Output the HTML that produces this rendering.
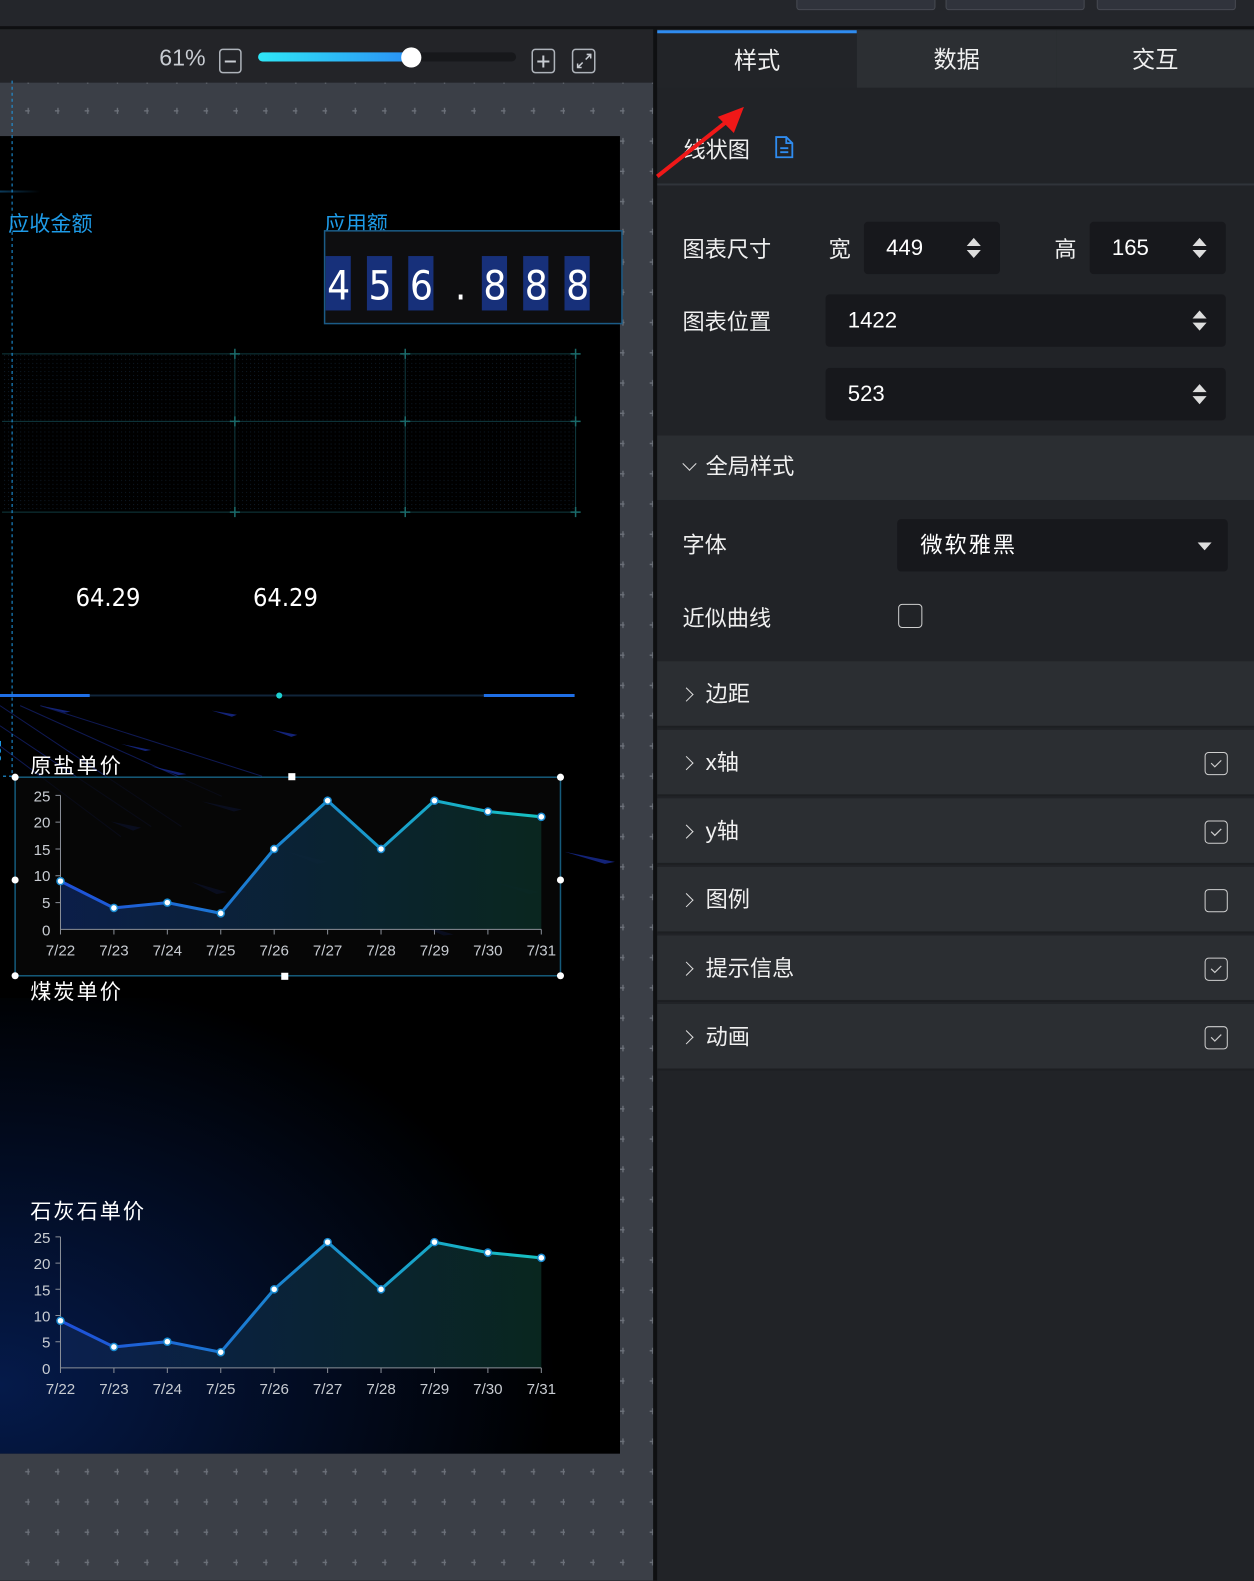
<!DOCTYPE html>
<html><head><meta charset="utf-8"><style>
*{margin:0;padding:0;box-sizing:border-box}
body{width:1254px;height:1580px;overflow:hidden;background:#202226;font-family:"Liberation Sans","Noto Sans CJK SC",sans-serif}
#w{position:absolute;left:0;top:0;width:1244px;height:1568px;transform:scale(1.00804);transform-origin:0 0}
.a{position:absolute}
.tab{position:absolute;top:30px;height:57px;width:198px;background:#2c2f33;color:#f0f0f0;font-size:23px;text-align:center;line-height:58px}
.lbl{position:absolute;color:#f0f0f0;font-size:22px}
.inp{position:absolute;background:#17181c;border-radius:4px;color:#fff;font-size:22px;line-height:52px;height:52px;padding-left:22px}
.sp{position:absolute;right:18px;top:14px;width:16px;height:24px}
.sec{position:absolute;left:652px;width:592px;height:66px;background:#2b2e32;border-bottom:2px solid #1d1f22;color:#f0f0f0;font-size:22px;line-height:66px;padding-left:48px}
.chev{position:absolute;left:24px;top:28px;width:10px;height:10px;border-right:1.8px solid #ddd;border-top:1.8px solid #ddd;transform:rotate(45deg)}
.cb{position:absolute;right:26px;top:22px;width:23px;height:23px;border:1.5px solid #cfcfcf;border-radius:4px}
</style></head><body><div id="w">
<div class="a" style="left:0;top:0;width:1244px;height:26px;background:#24262b"></div>
<div class="a" style="left:790px;top:-4px;width:138px;height:14px;background:#30333c;border:1.5px solid #474a52;border-radius:3px"></div>
<div class="a" style="left:938px;top:-4px;width:138px;height:14px;background:#30333c;border:1.5px solid #474a52;border-radius:3px"></div>
<div class="a" style="left:1088px;top:-4px;width:138px;height:14px;background:#30333c;border:1.5px solid #474a52;border-radius:3px"></div>
<div class="a" style="left:0;top:26px;width:1244px;height:3px;background:#0e0f11"></div>

<svg class="a" style="left:0;top:29px" width="650" height="1539" viewBox="0 29 650 1539">
<defs>
<pattern id="dots" x="0" y="0" width="29.5" height="30" patternUnits="userSpaceOnUse"><path d="M25 20h6M28 17v6" stroke="#6c717a" stroke-width="1.3"/></pattern>
<linearGradient id="sl" x1="0" x2="1"><stop offset="0" stop-color="#2fe7f7"/><stop offset="1" stop-color="#2a8ff5"/></linearGradient>
<linearGradient id="ln" x1="0" x2="1"><stop offset="0" stop-color="#1f4fd9"/><stop offset=".5" stop-color="#1a8ad0"/><stop offset="1" stop-color="#17c2c2"/></linearGradient>
<linearGradient id="ar" x1="0" x2="1"><stop offset="0" stop-color="#0c2150" stop-opacity=".9"/><stop offset="1" stop-color="#0a2a22" stop-opacity=".9"/></linearGradient>
<linearGradient id="fl" x1="0" x2="1"><stop offset="0" stop-color="#0b3a5a"/><stop offset="1" stop-color="#000"/></linearGradient>
<radialGradient id="bg2" cx="0" cy="0.85" r="0.9"><stop offset="0" stop-color="#051a4a"/><stop offset="1" stop-color="#000"/></radialGradient>
<pattern id="grid" width="4" height="4" patternUnits="userSpaceOnUse"><rect width="1" height="1" fill="#0e1a26"/></pattern>
</defs>
<rect x="0" y="29" width="650" height="53" fill="#232428"/>
<text x="158" y="65" fill="#c8ccd2" font-size="23" font-family="Liberation Sans">61%</text>
<rect x="218" y="49" width="21" height="23" rx="3" fill="none" stroke="#aeb3ba" stroke-width="1.5"/><path d="M223 61h11" stroke="#c8ccd2" stroke-width="2"/>
<rect x="256" y="52" width="256" height="9" rx="4.5" fill="#17181b"/>
<rect x="256" y="52" width="154" height="9" rx="4.5" fill="url(#sl)"/>
<circle cx="408" cy="57" r="10" fill="#fff"/>
<rect x="528" y="49" width="22" height="23" rx="3" fill="none" stroke="#aeb3ba" stroke-width="1.5"/><path d="M533 61h12M539 55v12" stroke="#c8ccd2" stroke-width="2"/>
<rect x="568" y="49" width="22" height="23" rx="3" fill="none" stroke="#aeb3ba" stroke-width="1.5"/><path d="M573 67l5-5M573 63v4h4M586 54l-5 5M582 54h4v4" stroke="#c8ccd2" stroke-width="1.5" fill="none"/>
<rect x="0" y="82" width="648" height="1486" fill="#3b3f47"/>
<rect x="0" y="82" width="648" height="1486" fill="url(#dots)"/>
<rect x="0" y="135" width="615" height="1307" fill="#000"/>
<rect x="0" y="990" width="615" height="452" fill="url(#bg2)"/>
<rect x="0" y="189" width="40" height="2" fill="url(#fl)"/>
<text x="8" y="229" fill="#1e9be8" font-size="21">应收金额</text>
<text x="322" y="229" fill="#1e9be8" font-size="21">应用额</text>
<rect x="322" y="229" width="295" height="92" fill="#0e0e10" stroke="#1b5b86" stroke-width="1.5"/>
<g fill="#17307a"><rect x="323" y="254" width="25" height="54"/><rect x="364" y="254" width="25" height="54"/><rect x="405" y="254" width="25" height="54"/><rect x="478" y="254" width="25" height="54"/><rect x="519" y="254" width="25" height="54"/><rect x="560" y="254" width="25" height="54"/></g>
<g fill="#fff" font-size="40" font-family="DejaVu Sans Condensed,Liberation Sans" text-anchor="middle"><text x="336" y="297">4</text><text x="377" y="297">5</text><text x="418" y="297">6</text><text x="457" y="297">.</text><text x="491" y="297">8</text><text x="532" y="297">8</text><text x="573" y="297">8</text></g>
<rect x="2" y="351" width="569" height="157" fill="url(#grid)"/>
<g stroke="#0f3a3f" stroke-width="1" fill="none"><path d="M2 351h569M2 418h569M2 508h569M233 351v157M402 351v157M571 351v157"/></g>
<g stroke="#1a6a6a" stroke-width="1.5"><path d="M228 351h10M233 346v10M397 351h10M402 346v10M566 351h10M571 346v10M228 418h10M233 413v10M397 418h10M402 413v10M566 418h10M571 413v10M228 508h10M233 503v10M397 508h10M402 503v10M566 508h10M571 503v10"/></g>
<g fill="#fff" font-size="25" font-family="DejaVu Sans Condensed,Liberation Sans"><text x="75" y="601">64.29</text><text x="251" y="601">64.29</text></g>
<path d="M0 690h570" stroke="#10253a" stroke-width="2"/>
<path d="M0 690h89M480 690h90" stroke="#1f6fe6" stroke-width="3"/>
<circle cx="277" cy="690" r="3" fill="#1fd0d0"/>
<g fill="#1a2fa0" opacity=".75"><path d="M110 815l30 6-8 3zM190 875l35 10-10 2zM285 845l40 10-10 2zM410 915l40 12-10 1zM560 845l50 10-10 2zM490 875l45 10-10 2zM210 705l25 4-5 2zM270 724l25 5-6 2zM120 738l30 6-6 1zM150 760l35 8-8 1zM40 700l30 6-6 1zM200 795l40 8-8 2z"/></g>
<g stroke="#1a2a8a" stroke-width="1" opacity=".6"><path d="M0 700l180 120M0 720l150 100M0 740l120 90M20 700l200 90M40 700l220 70"/></g>
<path d="M12 80v690H0" stroke="#1e9be8" stroke-width="1" stroke-dasharray="3 3" fill="none"/>
<text x="10" y="740" fill="#1e9be8" font-size="13" transform="rotate(90 4 728)">523</text>
<text x="30" y="767" fill="#fff" font-size="21" letter-spacing="2">原盐单价</text>
<rect x="15" y="771" width="541" height="197" fill="#070708" fill-opacity=".8" stroke="#155a7a" stroke-width="1.5"/>
<path d="M60 874.1L113 900.7L166 895.4L219 906L272 842.2L325 794.3L378 842.2L431 794.3L484 805L537 810.3V922H60Z" fill="url(#ar)"/>
<path d="M60 789V922H537M60 922v5M113 922v5M166 922v5M219 922v5M272 922v5M325 922v5M378 922v5M431 922v5M484 922v5M537 922v5M55 789h5M55 815.6h5M55 842.2h5M55 868.8h5M55 895.4h5" stroke="#8a8f98" stroke-width="1" fill="none"/>
<path d="M60 874.1L113 900.7L166 895.4L219 906L272 842.2L325 794.3L378 842.2L431 794.3L484 805L537 810.3" stroke="url(#ln)" stroke-width="3" fill="none"/>
<g fill="#fff" stroke="#1a8ad0" stroke-width="1.5"><circle cx="60" cy="874.1" r="3.5"/><circle cx="113" cy="900.7" r="3.5"/><circle cx="166" cy="895.4" r="3.5"/><circle cx="219" cy="906" r="3.5"/><circle cx="272" cy="842.2" r="3.5"/><circle cx="325" cy="794.3" r="3.5"/><circle cx="378" cy="842.2" r="3.5"/><circle cx="431" cy="794.3" r="3.5"/><circle cx="484" cy="805" r="3.5"/><circle cx="537" cy="810.3" r="3.5"/></g>
<g fill="#c8ccd2" font-size="15" text-anchor="end"><text x="50" y="795">25</text><text x="50" y="821">20</text><text x="50" y="848">15</text><text x="50" y="874">10</text><text x="50" y="901">5</text><text x="50" y="928">0</text></g>
<g fill="#c8ccd2" font-size="15" text-anchor="middle"><text x="60" y="948">7/22</text><text x="113" y="948">7/23</text><text x="166" y="948">7/24</text><text x="219" y="948">7/25</text><text x="272" y="948">7/26</text><text x="325" y="948">7/27</text><text x="378" y="948">7/28</text><text x="431" y="948">7/29</text><text x="484" y="948">7/30</text><text x="537" y="948">7/31</text></g>
<g fill="#fff"><circle cx="15" cy="771" r="3.5"/><circle cx="556" cy="771" r="3.5"/><circle cx="15" cy="873" r="3.5"/><circle cx="556" cy="873" r="3.5"/><circle cx="15" cy="968" r="3.5"/><circle cx="556" cy="968" r="3.5"/><rect x="286" y="767" width="7" height="7"/><rect x="279" y="965" width="7" height="7"/></g>
<text x="30" y="991" fill="#fff" font-size="21" letter-spacing="2">煤炭单价</text>
<text x="30" y="1209" fill="#fff" font-size="21" letter-spacing="2">石灰石单价</text>
<path d="M60 1310.2L113 1336.2L166 1331L219 1341.4L272 1279L325 1232.2L378 1279L431 1232.2L484 1242.6L537 1247.8V1357H60Z" fill="url(#ar)"/>
<path d="M60 1227V1357H537M60 1357v5M113 1357v5M166 1357v5M219 1357v5M272 1357v5M325 1357v5M378 1357v5M431 1357v5M484 1357v5M537 1357v5M55 1227h5M55 1253h5M55 1279h5M55 1305h5M55 1331h5" stroke="#8a8f98" stroke-width="1" fill="none"/>
<path d="M60 1310.2L113 1336.2L166 1331L219 1341.4L272 1279L325 1232.2L378 1279L431 1232.2L484 1242.6L537 1247.8" stroke="url(#ln)" stroke-width="3" fill="none"/>
<g fill="#fff" stroke="#1a8ad0" stroke-width="1.5"><circle cx="60" cy="1310.2" r="3.5"/><circle cx="113" cy="1336.2" r="3.5"/><circle cx="166" cy="1331" r="3.5"/><circle cx="219" cy="1341.4" r="3.5"/><circle cx="272" cy="1279" r="3.5"/><circle cx="325" cy="1232.2" r="3.5"/><circle cx="378" cy="1279" r="3.5"/><circle cx="431" cy="1232.2" r="3.5"/><circle cx="484" cy="1242.6" r="3.5"/><circle cx="537" cy="1247.8" r="3.5"/></g>
<g fill="#c8ccd2" font-size="15" text-anchor="end"><text x="50" y="1233">25</text><text x="50" y="1259">20</text><text x="50" y="1285">15</text><text x="50" y="1311">10</text><text x="50" y="1337">5</text><text x="50" y="1363">0</text></g>
<g fill="#c8ccd2" font-size="15" text-anchor="middle"><text x="60" y="1383">7/22</text><text x="113" y="1383">7/23</text><text x="166" y="1383">7/24</text><text x="219" y="1383">7/25</text><text x="272" y="1383">7/26</text><text x="325" y="1383">7/27</text><text x="378" y="1383">7/28</text><text x="431" y="1383">7/29</text><text x="484" y="1383">7/30</text><text x="537" y="1383">7/31</text></g>
</svg>

<div class="a" style="left:648px;top:29px;width:4px;height:1539px;background:#0f1012"></div>
<div class="a" style="left:652px;top:29px;width:592px;height:1539px;background:#212327"></div>
<div class="tab" style="left:652px;background:#222428;border-top:3px solid #2f8cf0;line-height:54px">样式</div>
<div class="tab" style="left:850px">数据</div>
<div class="tab" style="left:1048px;width:196px">交互</div>
<div class="lbl" style="left:678px;top:131px">线状图</div>
<svg class="a" style="left:767px;top:134px" width="22" height="24"><path d="M3 2h10l6 6v14H3z M13 2v6h6 M7 13h8M7 17h8" fill="none" stroke="#2f8cf0" stroke-width="1.8"/></svg>
<svg class="a" style="left:650px;top:100px" width="100" height="80"><path d="M2 75L78 15" stroke="#f01818" stroke-width="4"/><path d="M88 6L62 16L78 32Z" fill="#f01818"/></svg>
<div class="a" style="left:652px;top:182px;width:592px;height:2px;background:#30343a"></div>
<div class="lbl" style="left:677px;top:230px">图表尺寸</div>
<div class="lbl" style="left:822px;top:230px">宽</div>
<div class="inp" style="left:857px;top:220px;width:135px">449<svg class="sp" viewBox="0 0 16 24"><path d="M1 10L8 2L15 10ZM1 14L8 22L15 14Z" fill="#ddd"/></svg></div>
<div class="lbl" style="left:1046px;top:230px">高</div>
<div class="inp" style="left:1081px;top:220px;width:135px">165<svg class="sp" viewBox="0 0 16 24"><path d="M1 10L8 2L15 10ZM1 14L8 22L15 14Z" fill="#ddd"/></svg></div>
<div class="lbl" style="left:677px;top:302px">图表位置</div>
<div class="inp" style="left:819px;top:292px;width:397px">1422<svg class="sp" viewBox="0 0 16 24"><path d="M1 10L8 2L15 10ZM1 14L8 22L15 14Z" fill="#ddd"/></svg></div>
<div class="inp" style="left:819px;top:365px;width:397px">523<svg class="sp" viewBox="0 0 16 24"><path d="M1 10L8 2L15 10ZM1 14L8 22L15 14Z" fill="#ddd"/></svg></div>
<div class="sec" style="top:432px;height:64px;line-height:62px;border:0"><span class="chev" style="transform:rotate(135deg);top:23px;left:27px"></span>全局样式</div>
<div class="lbl" style="left:677px;top:523px">字体</div>
<div class="inp" style="left:890px;top:515px;width:328px;padding-left:23px;letter-spacing:2px">微软雅黑<svg class="a" style="right:16px;top:23px" width="14" height="8"><path d="M0 0h14L7 8z" fill="#ddd"/></svg></div>
<div class="lbl" style="left:677px;top:596px">近似曲线</div>
<div class="a" style="left:891px;top:599px;width:24px;height:24px;border:1.5px solid #cfcfcf;border-radius:4px"></div>
<div class="sec" style="top:656px">
<span class="chev"></span>边距</div>
<div class="sec" style="top:724px"><span class="chev"></span>x轴<svg class="cb" viewBox="0 0 23 23"><path d="M6 11l4 4 7-7" stroke="#ccc" stroke-width="1.3" fill="none"/></svg></div>
<div class="sec" style="top:792px"><span class="chev"></span>y轴<svg class="cb" viewBox="0 0 23 23"><path d="M6 11l4 4 7-7" stroke="#ccc" stroke-width="1.3" fill="none"/></svg></div>
<div class="sec" style="top:860px"><span class="chev"></span>图例<span class="cb"></span></div>
<div class="sec" style="top:928px"><span class="chev"></span>提示信息<svg class="cb" viewBox="0 0 23 23"><path d="M6 11l4 4 7-7" stroke="#ccc" stroke-width="1.3" fill="none"/></svg></div>
<div class="sec" style="top:996px"><span class="chev"></span>动画<svg class="cb" viewBox="0 0 23 23"><path d="M6 11l4 4 7-7" stroke="#ccc" stroke-width="1.3" fill="none"/></svg></div>
</div></body></html>
